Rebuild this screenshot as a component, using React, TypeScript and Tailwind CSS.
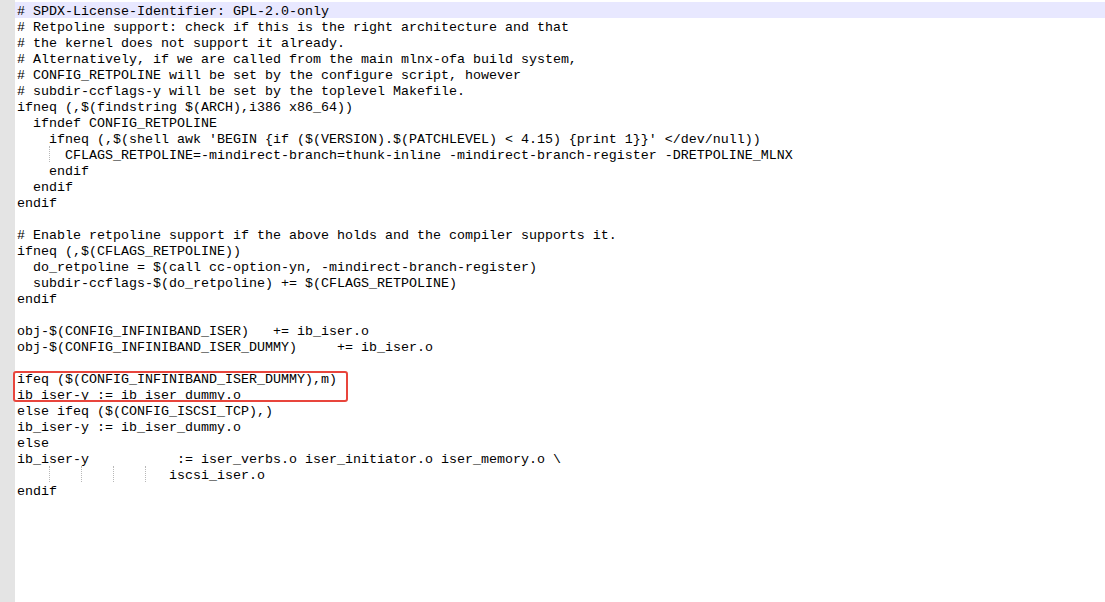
import React from 'react';

type Line = { text: string; guides?: number[] };

const lines: Line[] = [
  { text: '# SPDX-License-Identifier: GPL-2.0-only' },
  { text: '# Retpoline support: check if this is the right architecture and that' },
  { text: '# the kernel does not support it already.' },
  { text: '# Alternatively, if we are called from the main mlnx-ofa build system,' },
  { text: '# CONFIG_RETPOLINE will be set by the configure script, however' },
  { text: '# subdir-ccflags-y will be set by the toplevel Makefile.' },
  { text: 'ifneq (,$(findstring $(ARCH),i386 x86_64))' },
  { text: '  ifndef CONFIG_RETPOLINE' },
  { text: "    ifneq (,$(shell awk 'BEGIN {if ($(VERSION).$(PATCHLEVEL) < 4.15) {print 1}}' </dev/null))" },
  { text: '      CFLAGS_RETPOLINE=-mindirect-branch=thunk-inline -mindirect-branch-register -DRETPOLINE_MLNX', guides: [4] },
  { text: '    endif' },
  { text: '  endif' },
  { text: 'endif' },
  { text: '' },
  { text: '# Enable retpoline support if the above holds and the compiler supports it.' },
  { text: 'ifneq (,$(CFLAGS_RETPOLINE))' },
  { text: '  do_retpoline = $(call cc-option-yn, -mindirect-branch-register)' },
  { text: '  subdir-ccflags-$(do_retpoline) += $(CFLAGS_RETPOLINE)' },
  { text: 'endif' },
  { text: '' },
  { text: 'obj-$(CONFIG_INFINIBAND_ISER)   += ib_iser.o' },
  { text: 'obj-$(CONFIG_INFINIBAND_ISER_DUMMY)     += ib_iser.o' },
  { text: '' },
];

const boxed: Line[] = [
  { text: 'ifeq ($(CONFIG_INFINIBAND_ISER_DUMMY),m)' },
  { text: 'ib_iser-y := ib_iser_dummy.o' },
];

const rest: Line[] = [
  { text: 'else ifeq ($(CONFIG_ISCSI_TCP),)' },
  { text: 'ib_iser-y := ib_iser_dummy.o' },
  { text: 'else' },
  { text: 'ib_iser-y           := iser_verbs.o iser_initiator.o iser_memory.o \\' },
  { text: '                   iscsi_iser.o', guides: [4, 8, 12, 16] },
  { text: 'endif' },
];

const guideLeft: Record<number, string> = {
  4: 'left-[34px]',
  8: 'left-[66px]',
  12: 'left-[98px]',
  16: 'left-[130px]',
};

const CodeLine: React.FC<{ line: Line; current?: boolean }> = ({ line, current }) => (
  <div className={`relative h-4 pl-[2px] pt-[4px] leading-[12px] whitespace-pre ${current ? 'bg-[#e8e8ff]' : ''}`}>
    {line.guides?.map((g) => (
      <span key={g} className={`absolute top-0 h-4 border-l border-dotted border-[#b8b8b8] ${guideLeft[g]}`} />
    ))}
    {line.text || ' '}
  </div>
);

const App: React.FC = () => {
  return (
    <div className="flex h-[602px] w-[1105px] overflow-hidden bg-white">
      {/* fold margin */}
      <div className="w-[15px] shrink-0 bg-[#e4e4e4]" />

      {/* editor */}
      <div
        className="flex-1 pt-[2px] text-[13.33px] text-black"
        style={{ fontFamily: '"Liberation Mono", "Courier New", monospace' }}
      >
        {lines.map((line, i) => (
          <CodeLine key={i} line={line} current={i === 0} />
        ))}

        <div className="relative">
          {boxed.map((line, i) => (
            <CodeLine key={i} line={line} />
          ))}
          <div className="pointer-events-none absolute -left-[2px] top-[1px] h-[31px] w-[335px] rounded-[3px] border-2 border-[#e8453c]" />
        </div>

        {rest.map((line, i) => (
          <CodeLine key={i} line={line} />
        ))}
      </div>
    </div>
  );
};

export default App;
